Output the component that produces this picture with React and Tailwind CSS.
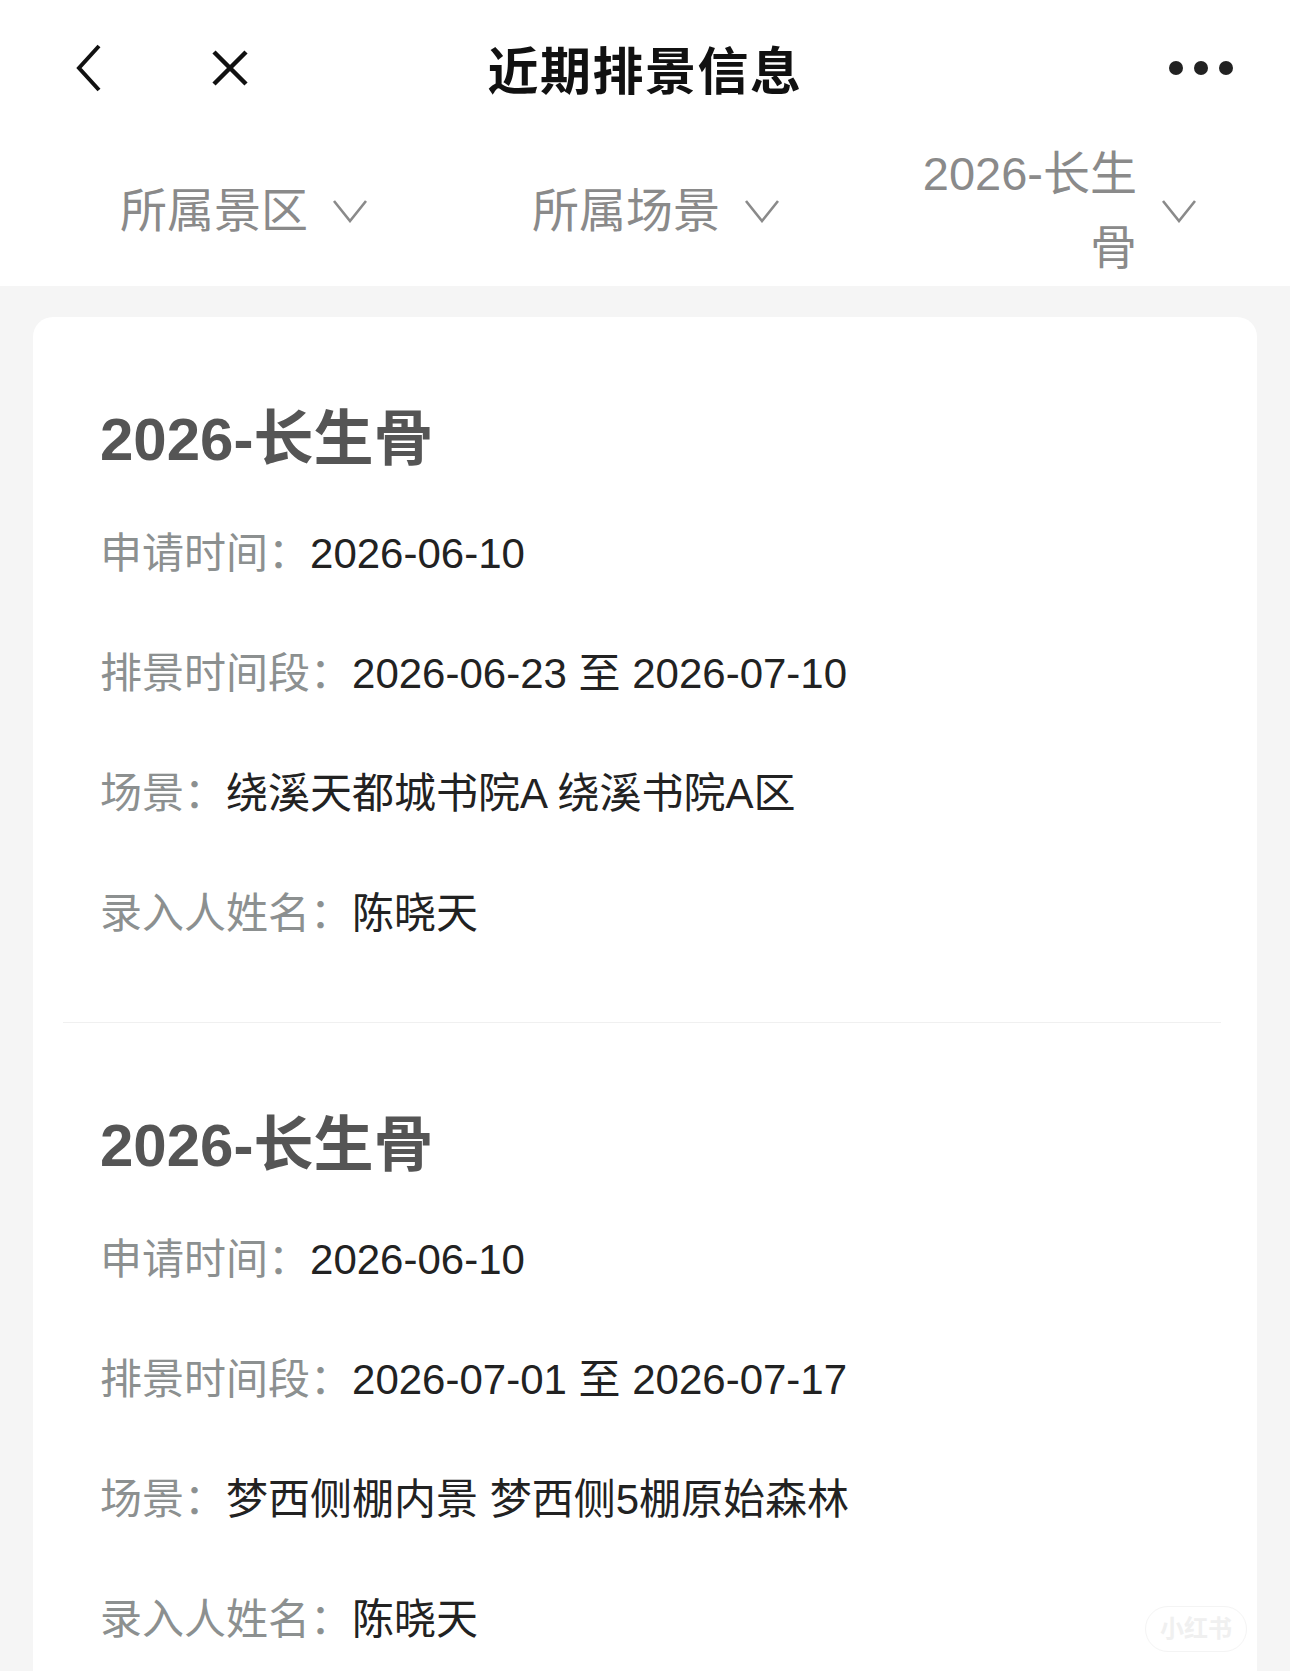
const items = [
  {
    title: '2026-长生骨',
    applied: '2026-06-10',
    range: '2026-06-23 至 2026-07-10',
    scene: '绕溪天都城书院A 绕溪书院A区',
    who: '陈晓天',
  },
  {
    title: '2026-长生骨',
    applied: '2026-06-10',
    range: '2026-07-01 至 2026-07-17',
    scene: '梦西侧棚内景 梦西侧5棚原始森林',
    who: '陈晓天',
  },
]

const font = { fontFamily: '"Liberation Sans", "Noto Sans CJK SC", sans-serif' }

function Chevron() {
  return (
    <svg width="36" height="24" viewBox="0 0 36 24" className="shrink-0">
      <polyline points="2,2 18,22 34,2" fill="none" stroke="#8a8a8a" strokeWidth="2.6" />
    </svg>
  )
}

function Filtro({ children, wrap }) {
  return (
    <div className="flex items-center justify-center gap-[24px]">
      <div className={`text-[47px] leading-[74px] text-[#8a8a8a] ${wrap ? 'w-[226px] text-right' : ''}`}>{children}</div>
      <Chevron />
    </div>
  )
}

function Linha({ label, children }) {
  return (
    <div className="flex h-[120px] items-center text-[42px]">
      <span className="text-[#8c9090]">{label}：</span>
      <span className="text-[#222]">{children}</span>
    </div>
  )
}

export default function App() {
  return (
    <div className="relative h-[1671px] overflow-hidden bg-[#f5f5f5]" style={font}>
      {/* topo */}
      <header className="grid h-[136px] grid-cols-[1fr_auto_1fr] items-center bg-white">
        <div className="flex items-center gap-[109px] pl-[75px]">
          <svg width="27" height="48" viewBox="0 0 27 48">
            <polyline points="24,2 4,24 24,46" fill="none" stroke="#111" strokeWidth="4" />
          </svg>
          <svg width="38" height="38" viewBox="0 0 38 38">
            <path d="M3 3 L35 35 M35 3 L3 35" stroke="#111" strokeWidth="4.5" />
          </svg>
        </div>
        <h1 className="text-[51px] font-bold tracking-[1.5px] text-[#111]" style={{ fontFamily: '"Noto Sans CJK SC", sans-serif' }}>近期排景信息</h1>
        <div className="flex items-center justify-end gap-[11px] pr-[57px]">
          <span className="h-[14px] w-[14px] rounded-full bg-[#222]" />
          <span className="h-[14px] w-[14px] rounded-full bg-[#222]" />
          <span className="h-[14px] w-[14px] rounded-full bg-[#222]" />
        </div>
      </header>

      {/* filtros */}
      <div className="grid h-[150px] grid-cols-[412px_412px_1fr] items-center bg-white pl-[38px] pr-[44px]">
        <Filtro>所属景区</Filtro>
        <Filtro>所属场景</Filtro>
        <Filtro wrap>2026-长生骨</Filtro>
      </div>

      <main className="mx-[33px] mt-[31px] rounded-[20px] bg-white">
        {items.map((it, i) => (
          <div key={i}>
            {i > 0 && <div className="ml-[30px] mr-[36px] h-px bg-[#f0f0f0]" />}
            <div className="px-[67px] pb-[49px] pt-[83px]">
              <div className="mb-[13px] text-[60px] font-bold leading-[80px] text-[#555]">{it.title}</div>
              <Linha label="申请时间">{it.applied}</Linha>
              <Linha label="排景时间段">{it.range}</Linha>
              <Linha label="场景">{it.scene}</Linha>
              <Linha label="录入人姓名">{it.who}</Linha>
            </div>
          </div>
        ))}
      </main>

      <div className="absolute bottom-[19px] right-[43px] rounded-full border border-[#f4f4f4] px-[14px] py-[4px] text-[24px] font-bold text-[#f0f0f0]">小红书</div>
    </div>
  )
}
